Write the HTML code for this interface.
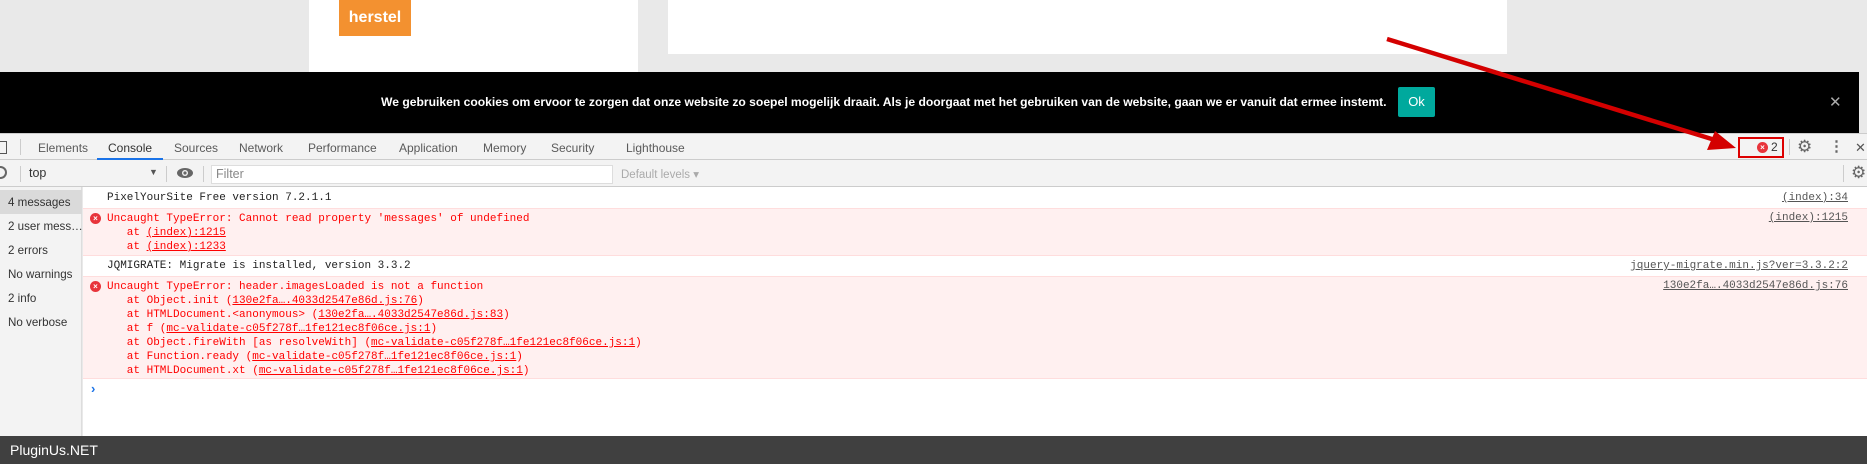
<!DOCTYPE html>
<html><head><meta charset="utf-8"><style>
*{margin:0;padding:0;box-sizing:border-box}
body{width:1867px;height:464px;overflow:hidden;background:#e9e9e9;position:relative;font-family:"Liberation Sans",Arial,sans-serif}
.a{position:absolute;white-space:nowrap}
.tab{position:absolute;top:141px;font-size:12px;color:#5a5a5a}
.mono{font-family:"Liberation Mono",monospace;font-size:11px}
.err{color:#f00}
.link{text-decoration:underline}
.side{position:absolute;left:8px;font-size:11.6px;color:#333}
.rl{position:absolute;right:19px;color:#555;text-decoration:underline;font-family:"Liberation Mono",monospace;font-size:11px}
.ic{position:absolute;width:11px;height:11px;border-radius:50%;background:#e8343b;color:#fff;font-size:8px;line-height:11px;text-align:center;font-weight:bold}
</style></head><body>
<div class="a" style="left:309px;top:0;width:329px;height:72px;background:#fff"></div>
<div class="a" style="left:339px;top:0;width:72px;height:36px;background:#f39130;color:#fff;font-weight:bold;font-size:16px;line-height:36px;text-align:center">herstel</div>
<div class="a" style="left:668px;top:0;width:839px;height:54px;background:#fff"></div>
<div class="a" style="left:0;top:72px;width:1859px;height:61px;background:#000"></div>
<div class="a" style="left:381px;top:94px;color:#fff;font-size:12px;font-weight:bold;line-height:16px;transform:scaleX(1.01);transform-origin:left">We gebruiken cookies om ervoor te zorgen dat onze website zo soepel mogelijk draait. Als je doorgaat met het gebruiken van de website, gaan we er vanuit dat ermee instemt.</div>
<div class="a" style="left:1398px;top:87px;width:37px;height:30px;background:#00a99d;border-radius:2px;color:#fff;font-size:13px;line-height:30px;text-align:center">Ok</div>
<div class="a" style="left:1829px;top:93px;color:#aaa;font-size:15px">✕</div>
<div class="a" style="left:0;top:133px;width:1867px;height:27px;background:#f3f3f3;border-top:1px solid #ccc;border-bottom:1px solid #ccc"></div>
<div class="a" style="left:-4px;top:141px;width:11px;height:13px;border:1.5px solid #555"></div>
<div class="a" style="left:20px;top:139px;width:1px;height:16px;background:#ccc"></div>
<div class="tab" style="left:38px">Elements</div>
<div class="tab" style="left:108px;color:#333">Console</div>
<div class="a" style="left:97px;top:158px;width:66px;height:2px;background:#1a73e8"></div>
<div class="tab" style="left:174px">Sources</div>
<div class="tab" style="left:239px">Network</div>
<div class="tab" style="left:308px">Performance</div>
<div class="tab" style="left:399px">Application</div>
<div class="tab" style="left:483px">Memory</div>
<div class="tab" style="left:551px">Security</div>
<div class="tab" style="left:626px">Lighthouse</div>
<div class="a" style="left:1738px;top:137px;width:46px;height:21px;border:2px solid #d00"></div>
<div class="ic" style="left:1757px;top:142px">×</div>
<div class="a" style="left:1771px;top:140px;font-size:12px;color:#333">2</div>
<div class="a" style="left:1789px;top:139px;width:1px;height:16px;background:#ccc"></div>
<div class="a" style="left:1797px;top:137px;font-size:17px;color:#666">⚙</div>
<div class="a" style="left:1829px;top:137px;font-size:15px;color:#666;font-weight:bold">⋮</div>
<div class="a" style="left:1855px;top:140px;font-size:13px;color:#555">✕</div>
<div class="a" style="left:0;top:160px;width:1867px;height:27px;background:#f3f3f3;border-bottom:1px solid #ccc"></div>
<div class="a" style="left:-6px;top:166px;width:13px;height:13px;border:2px solid #666;border-radius:50%"></div>
<div class="a" style="left:20px;top:166px;width:1px;height:16px;background:#ccc"></div>
<div class="a" style="left:29px;top:166px;font-size:12.5px;color:#333">top</div>
<div class="a" style="left:149px;top:167px;font-size:9px;color:#555">▼</div>
<div class="a" style="left:166px;top:166px;width:1px;height:16px;background:#ccc"></div>
<svg class="a" style="left:176px;top:167px" width="18" height="12"><ellipse cx="9" cy="6" rx="8" ry="5" fill="#666"/><circle cx="9" cy="6" r="3" fill="#f3f3f3"/><circle cx="9" cy="6" r="1.6" fill="#666"/></svg>
<div class="a" style="left:203px;top:166px;width:1px;height:16px;background:#ccc"></div>
<div class="a" style="left:211px;top:165px;width:402px;height:19px;background:#fff;border:1px solid #ddd;font-size:12.5px;color:#888;padding:1px 4px">Filter</div>
<div class="a" style="left:621px;top:167px;font-size:11.5px;color:#aaa">Default levels ▾</div>
<div class="a" style="left:1843px;top:165px;width:1px;height:17px;background:#ccc"></div>
<div class="a" style="left:1851px;top:163px;font-size:17px;color:#666">⚙</div>
<div class="a" style="left:0;top:187px;width:82px;height:249px;background:#f3f3f3;border-right:1px solid #ddd"></div>
<div class="a" style="left:0;top:190px;width:82px;height:24px;background:#dadada"></div>
<div class="side" style="top:196px">4 messages</div>
<div class="side" style="top:220px">2 user mess…</div>
<div class="side" style="top:244px">2 errors</div>
<div class="side" style="top:268px">No warnings</div>
<div class="side" style="top:292px">2 info</div>
<div class="side" style="top:316px">No verbose</div>
<div class="a" style="left:83px;top:187px;width:1784px;height:249px;background:#fff"></div>
<div class="a mono" style="left:107px;top:192px;color:#222">PixelYourSite Free version 7.2.1.1</div>
<div class="rl" style="top:192px">(index):34</div>
<div class="a" style="left:83px;top:208px;width:1784px;height:48px;background:#fff0f0;border-top:1px solid #fdd;border-bottom:1px solid #fdd"></div>
<div class="ic" style="left:90px;top:213px">×</div>
<div class="a mono err" style="left:107px;top:212px;line-height:14px">Uncaught TypeError: Cannot read property 'messages' of undefined<br>&nbsp;&nbsp;&nbsp;at <span class="link">(index):1215</span><br>&nbsp;&nbsp;&nbsp;at <span class="link">(index):1233</span></div>
<div class="rl" style="top:212px">(index):1215</div>
<div class="a mono" style="left:107px;top:260px;color:#222">JQMIGRATE: Migrate is installed, version 3.3.2</div>
<div class="rl" style="top:260px">jquery-migrate.min.js?ver=3.3.2:2</div>
<div class="a" style="left:83px;top:276px;width:1784px;height:103px;background:#fff0f0;border-top:1px solid #fdd;border-bottom:1px solid #fdd"></div>
<div class="ic" style="left:90px;top:281px">×</div>
<div class="a mono err" style="left:107px;top:280px;line-height:14px">Uncaught TypeError: header.imagesLoaded is not a function<br>&nbsp;&nbsp;&nbsp;at Object.init (<span class="link">130e2fa….4033d2547e86d.js:76</span>)<br>&nbsp;&nbsp;&nbsp;at HTMLDocument.&lt;anonymous&gt; (<span class="link">130e2fa….4033d2547e86d.js:83</span>)<br>&nbsp;&nbsp;&nbsp;at f (<span class="link">mc-validate-c05f278f…1fe121ec8f06ce.js:1</span>)<br>&nbsp;&nbsp;&nbsp;at Object.fireWith [as resolveWith] (<span class="link">mc-validate-c05f278f…1fe121ec8f06ce.js:1</span>)<br>&nbsp;&nbsp;&nbsp;at Function.ready (<span class="link">mc-validate-c05f278f…1fe121ec8f06ce.js:1</span>)<br>&nbsp;&nbsp;&nbsp;at HTMLDocument.xt (<span class="link">mc-validate-c05f278f…1fe121ec8f06ce.js:1</span>)</div>
<div class="rl" style="top:280px">130e2fa….4033d2547e86d.js:76</div>
<div class="a" style="left:91px;top:381px;color:#1a73e8;font-size:13px;font-weight:bold">›</div>
<div class="a" style="left:0;top:436px;width:1867px;height:28px;background:#404040"></div>
<div class="a" style="left:10px;top:442px;color:#fff;font-size:14px">PluginUs.NET</div>
<svg class="a" style="left:0;top:0" width="1867" height="464"><line x1="1387" y1="39" x2="1715" y2="140" stroke="#d40000" stroke-width="4.5"/><polygon points="1736,148 1707,150 1715,131" fill="#d40000"/></svg>
</body></html>
